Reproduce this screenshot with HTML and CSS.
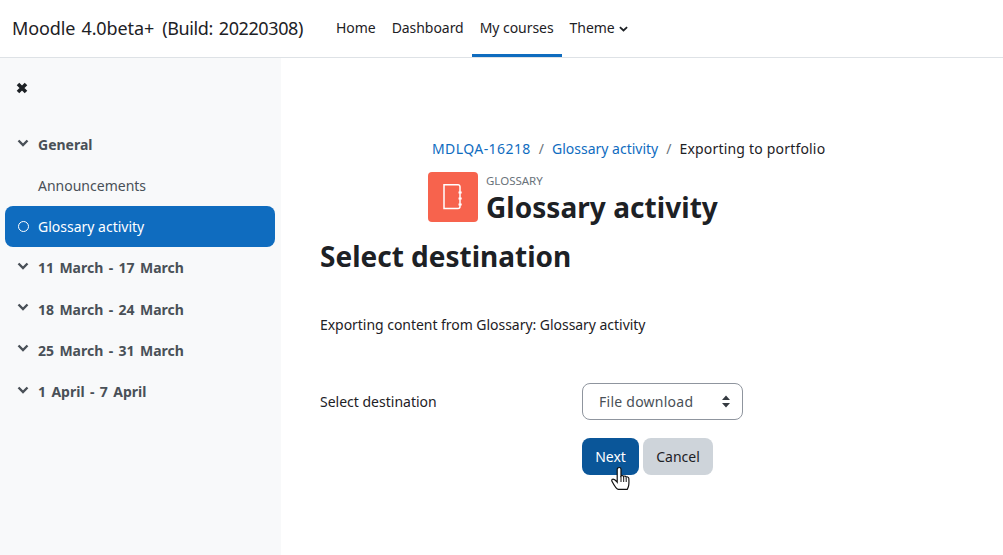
FILE: index.html
```html
<!DOCTYPE html>
<html lang="en">
<head>
<meta charset="utf-8">
<title>Exporting to portfolio</title>
<link rel="stylesheet" href="styles.css">
</head>
<body>
<header class="navbar">
  <div class="brand">Moodle 4.0beta+ <span class="build">(Build: 20220308)</span></div>
  <nav class="nav">
    <a class="nav-item">Home</a>
    <a class="nav-item">Dashboard</a>
    <a class="nav-item active">My courses</a>
    <a class="nav-item">Theme<svg class="nav-caret" viewBox="0 0 10 6" width="9" height="6"><path d="M1 1l4 3.600L9 1" fill="none" stroke="#1d2125" stroke-width="2"/></svg></a>
  </nav>
</header>
<div class="page">
  <aside class="drawer">
    <div class="close-row">
      <svg class="close-icon" viewBox="0 0 12 12" width="12" height="12"><path d="M2 2l8 8M10 2l-8 8" fill="none" stroke="#1d2125" stroke-width="3.600"/></svg>
    </div>
    <ul class="index">
      <li class="section"><svg class="chev" viewBox="0 0 12 8" width="12" height="8"><path d="M1.500 1.500L6 6l4.500-4.500" fill="none" stroke="#495057" stroke-width="2.400"/></svg>General</li>
      <li class="activity">Announcements</li>
      <li class="activity current"><span class="dot"></span>Glossary activity</li>
      <li class="section"><svg class="chev" viewBox="0 0 12 8" width="12" height="8"><path d="M1.500 1.500L6 6l4.500-4.500" fill="none" stroke="#495057" stroke-width="2.400"/></svg>11 March - 17 March</li>
      <li class="section"><svg class="chev" viewBox="0 0 12 8" width="12" height="8"><path d="M1.500 1.500L6 6l4.500-4.500" fill="none" stroke="#495057" stroke-width="2.400"/></svg>18 March - 24 March</li>
      <li class="section"><svg class="chev" viewBox="0 0 12 8" width="12" height="8"><path d="M1.500 1.500L6 6l4.500-4.500" fill="none" stroke="#495057" stroke-width="2.400"/></svg>25 March - 31 March</li>
      <li class="section"><svg class="chev" viewBox="0 0 12 8" width="12" height="8"><path d="M1.500 1.500L6 6l4.500-4.500" fill="none" stroke="#495057" stroke-width="2.400"/></svg>1 April - 7 April</li>
    </ul>
  </aside>
  <main class="main">
    <div class="page-head">
      <ol class="crumbs">
        <li class="crumb-code"><a>MDLQA-16218</a></li>
        <li class="sep">/</li>
        <li><a>Glossary activity</a></li>
        <li class="sep">/</li>
        <li class="crumb-current">Exporting to portfolio</li>
      </ol>
      <div class="activity-head">
        <div class="activity-icon">
          <svg viewBox="0 0 20 26" width="20" height="26"><path d="M1 .8H15a2 2 0 0 1 2 2V22.400a2 2 0 0 1-2 2H1z" fill="none" stroke="#fff" stroke-width="1.500"/><path d="M15.500 8.500h3.200M15.500 14.500h3.200M15.500 20.500h3.200" stroke="#fff" stroke-width="2"/></svg>
        </div>
        <div class="activity-text">
          <div class="activity-type">GLOSSARY</div>
          <h1 class="activity-title">Glossary activity</h1>
        </div>
      </div>
    </div>
    <h2 class="title">Select destination</h2>
    <p class="intro">Exporting content from Glossary: Glossary activity</p>
    <form class="form">
      <div class="form-row">
        <label class="form-label">Select destination</label>
        <div class="select">
          <span>File download</span>
          <svg viewBox="0 0 8 13" width="8" height="13"><path d="M4 .5L8 5H0zM4 12.500L0 8h8z" fill="#343a40"/></svg>
        </div>
      </div>
      <div class="actions">
        <div class="btn primary">Next</div>
        <div class="btn secondary">Cancel</div>
        <svg class="cursor" viewBox="0 0 19 25" width="19" height="25"><path d="M8.200 1.500c1 0 1.800.8 1.800 1.800V10c.5-.7 2.400-.7 2.700.5.5-.8 2.300-.6 2.500.7.6-.6 2.500-.4 2.600 1.100.2 2.500.2 5.500-.2 7.500-.3 1.300-.9 2.500-1.400 3.600H7.200C5.500 23 3.200 19.500 1.100 15.500c-.7-1.200-.2-2.400.8-2.400.9-.1 2.700 1.100 4.300 3.100V3.300C6.200 2.300 7.200 1.500 8.200 1.500z" fill="#fff" stroke="#111" stroke-width="1.200"/><path d="M10 10v6M12.700 11v5M15.200 12v4" stroke="#111" stroke-width="1"/></svg>
      </div>
    </form>
  </main>
</div>
</body>
</html>
```
FILE: styles.css
```css
* { box-sizing: border-box; }
html, body { margin: 0; height: 100%; }
body {
  font-family: "Noto Sans", "Open Sans", sans-serif;
  font-size: 14px;
  color: #1d2125;
  background: #fff;
  overflow: hidden;
}
.navbar {
  height: 58px;
  display: flex;
  align-items: stretch;
  border-bottom: 1px solid #dee2e6;
  padding-left: 12px;
}
.brand {
  font-size: 18px;
  line-height: 57px;
  width: 315px;
  white-space: nowrap;
  letter-spacing: -0.1px;
  word-spacing: 1.500px;
}
.build { margin-left: 2px; letter-spacing: -0.39px; }
.nav { display: flex; margin-left: 1px; }
.nav-item {
  padding: 0 8px;
  line-height: 55px;
  height: 57px;
  border-bottom: 3px solid transparent;
  white-space: nowrap;
  letter-spacing: -0.05px;
}
.nav-item.active { border-bottom-color: #0f6cbf; }
.nav-caret { margin-left: 4px; vertical-align: 1px; }
.page { display: flex; height: 497px; }
.drawer {
  width: 281px;
  background: #f8f9fa;
  padding: 0 6px 0 5px;
  flex: none;
}
.close-row { height: 66px; padding: 24px 0 0 11px; }
.close-icon { display: block; }
.index { list-style: none; margin: 0; padding: 0; }
.section, .activity {
  height: 41.200px;
  line-height: 41px;
  padding-left: 33px;
  position: relative;
  color: #495057;
  white-space: nowrap;
}
.section { font-weight: 700; padding-left: 12px; display: flex; align-items: center; word-spacing: 1.750px; }
.chev { margin-right: 9px; margin-top: -4px; }
.activity.current {
  height: 41px;
  background: #0f6cbf;
  color: #fff;
  border-radius: 8px;
  padding-left: 13px;
  display: flex;
  align-items: center;
}
.dot {
  width: 11px;
  height: 11px;
  border: 1.500px solid #fff;
  border-radius: 50%;
  margin-right: 9px;
}
.main { flex: 1; padding: 0 0 0 39px; }
.page-head { padding: 80px 0 0 108px; }
.crumbs {
  list-style: none;
  margin: 0 0 12px 4px;
  padding: 0;
  display: flex;
  gap: 8px;
  line-height: 22px;
  white-space: nowrap;
}
.crumbs a { color: #0f6cbf; }
.crumb-code { letter-spacing: 0.42px; }
.crumb-current { letter-spacing: 0.19px; }
.sep { color: #6a737b; }
.activity-head { display: flex; gap: 8px; }
.activity-icon {
  width: 50px;
  height: 50px;
  background: #f7634d;
  border-radius: 4px;
  display: flex;
  align-items: center;
  justify-content: center;
}
.activity-text { padding-top: 1px; }
.activity-type { font-size: 11.500px; line-height: 16px; color: #6a737b; }
.activity-title { margin: 0; font-size: 28px; line-height: 36px; font-weight: 700; white-space: nowrap; letter-spacing: 0.05px; }
.title { margin: 11px 0 0; font-size: 28px; line-height: 41px; font-weight: 700; }
.intro { margin: 0; padding-top: 37px; line-height: 22px; letter-spacing: -0.04px; }
.form { padding-top: 47px; }
.form-row { display: flex; align-items: center; }
.form-label { width: 262px; }
.select {
  width: 161px;
  height: 37px;
  border: 1px solid #8f959e;
  border-radius: 8px;
  padding: 0 12px 0 16px;
  display: flex;
  align-items: center;
  justify-content: space-between;
  color: #495057;
  letter-spacing: 0.25px;
}
.actions { display: flex; gap: 4px; margin: 18px 0 0 262px; position: relative; }
.btn {
  height: 37px;
  line-height: 37px;
  border-radius: 8px;
  text-align: center;
}
.primary { width: 57px; background: #0a5699; color: #fff; }
.secondary { width: 70px; background: #ced4da; }
.cursor { position: absolute; left: 29px; top: 28px; }
```
